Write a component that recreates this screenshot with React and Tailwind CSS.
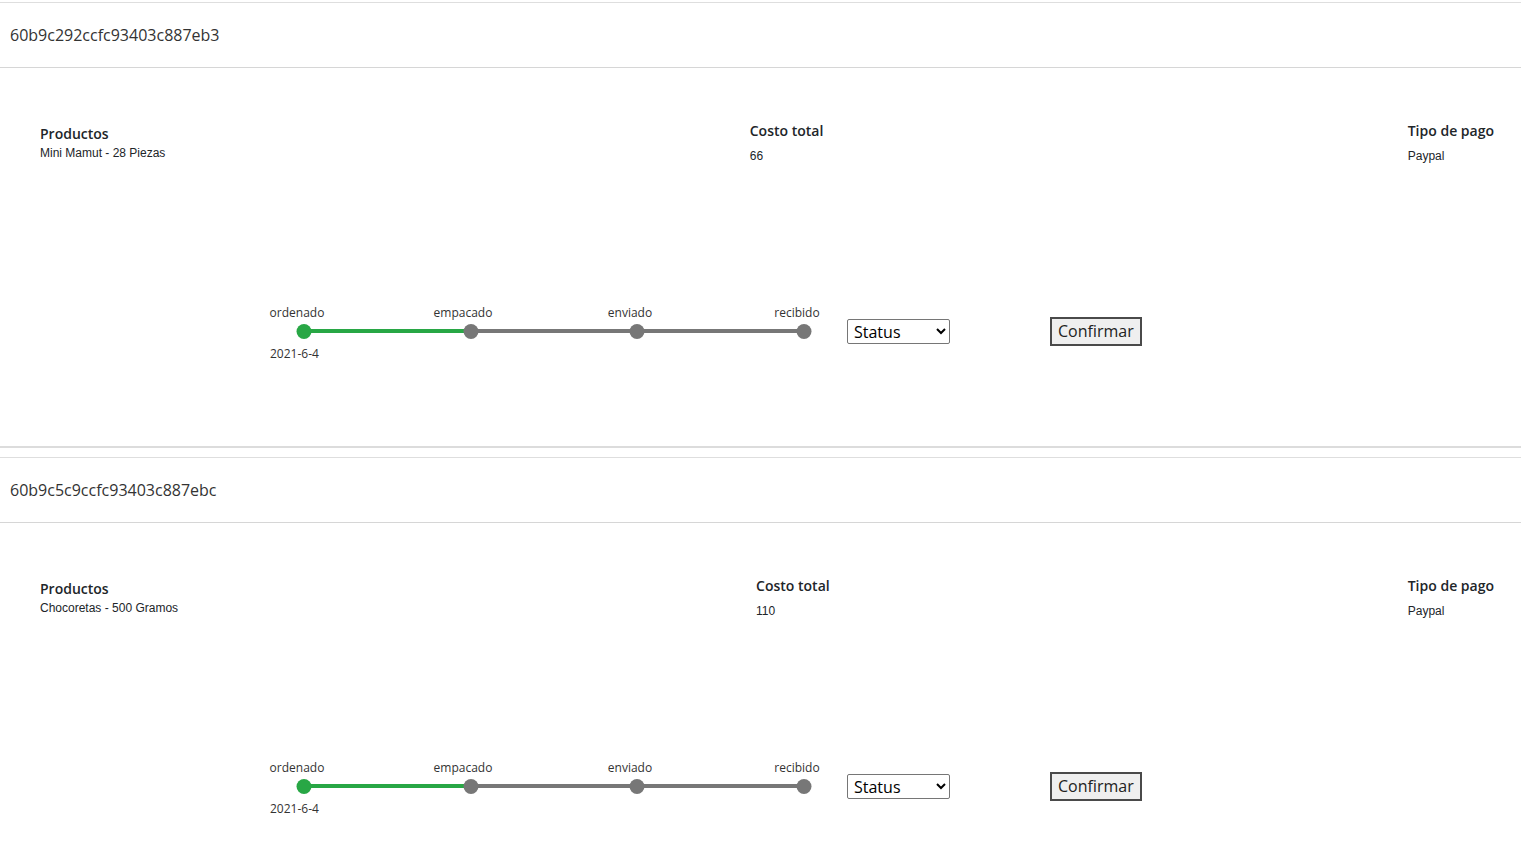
import React from 'react';

const orders = [
  { id: '60b9c292ccfc93403c887eb3', product: 'Mini Mamut - 28 Piezas', total: '66', payment: 'Paypal', date: '2021-6-4' },
  { id: '60b9c5c9ccfc93403c887ebc', product: 'Chocoretas - 500 Gramos', total: '110', payment: 'Paypal', date: '2021-6-4' },
];

const steps = [
  { label: 'ordenado', labelX: 35, dotX: 42 },
  { label: 'empacado', labelX: 201, dotX: 209 },
  { label: 'enviado', labelX: 368, dotX: 375 },
  { label: 'recibido', labelX: 535, dotX: 542 },
];

const Timeline = ({ date, current }) => {
  return (
    <div className="relative w-[570px] h-[60px] shrink-0">
      {/* track */}
      <div className="absolute left-[42px] w-[500px] top-[28px] h-[4px] bg-[#777]" />
      <div className="absolute left-[42px] w-[167px] top-[28px] h-[4px] bg-[#28a745]" />
      {steps.map((s, i) => (
        <React.Fragment key={s.label}>
          <span
            className="absolute top-[4px] -translate-x-1/2 text-[12px] leading-[16px] text-[#333] whitespace-nowrap"
            style={{ left: s.labelX }}
          >
            {s.label}
          </span>
          <span
            className={`absolute top-[23px] w-[15px] h-[15px] -translate-x-1/2 rounded-full ${i <= current ? 'bg-[#28a745]' : 'bg-[#777]'}`}
            style={{ left: s.dotX }}
          />
        </React.Fragment>
      ))}
      <span className="absolute left-[8px] top-[45px] text-[12px] leading-[16px] text-[#333]">{date}</span>
    </div>
  );
};

const OrderCard = ({ order }) => {
  return (
    <div className="border-t border-[#dedede] mb-[9px]">
      <div className="h-[65px] flex items-center px-[10px] border-b border-[#d6d6d6] text-[16px] text-[#333]">
        {order.id}
      </div>
      <div className="border-b-2 border-[#dcdcdc] pt-[53px] pb-[85px]">
        <div className="flex justify-between items-start pl-[40px] pr-[27px] text-[#212529]">
          <div className="mt-[3px]">
            <h3 className="text-[14px] leading-[20px] font-semibold">Productos</h3>
            <p className="mt-[2px] text-[12px] leading-[14px] font-['Liberation_Sans',Arial,sans-serif]">{order.product}</p>
          </div>
          <div>
            <h3 className="text-[14px] leading-[20px] font-semibold">Costo total</h3>
            <p className="mt-[7px] text-[12px] leading-[16px] font-['Liberation_Sans',Arial,sans-serif]">{order.total}</p>
          </div>
          <div>
            <h3 className="text-[14px] leading-[20px] font-semibold">Tipo de pago</h3>
            <p className="mt-[7px] text-[12px] leading-[16px] font-['Liberation_Sans',Arial,sans-serif]">{order.payment}</p>
          </div>
        </div>
        <div className="flex items-center mt-[137px] pl-[262px]">
          <Timeline date={order.date} current={0} />
          <select className="ml-[15px] w-[103px] h-[25px] border border-[#767676] rounded-[2px] bg-white text-[16px] text-black pl-[2px]">
            <option>Status</option>
            <option>ordenado</option>
            <option>empacado</option>
            <option>enviado</option>
            <option>recibido</option>
          </select>
          <button className="ml-[100px] h-[29px] px-[6px] bg-[#efefef] border-2 border-[#4a4a4a] text-[16px] text-[#222] leading-none">
            Confirmar
          </button>
        </div>
      </div>
    </div>
  );
};

const App = () => {
  return (
    <div className="min-h-screen bg-white pt-[2px] font-['Open_Sans',Arial,sans-serif]">
      {orders.map((o) => (
        <OrderCard key={o.id} order={o} />
      ))}
    </div>
  );
};

export default App;
